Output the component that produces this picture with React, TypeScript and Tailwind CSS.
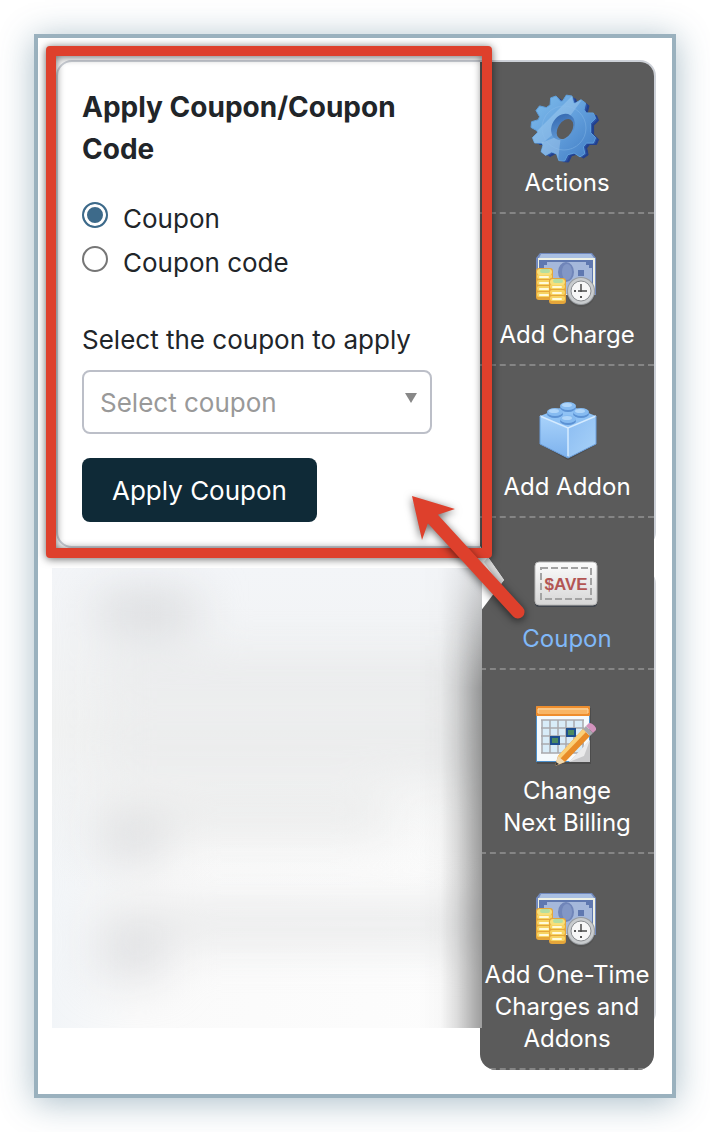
import React from "react";

const gearTeeth = [-81, -54, -22, 22, 56, 94, 129, 158, 186, 217, 251];

function gearPath(cx: number, cy: number, body: number, tip: number) {
  const at = (deg: number, r: number) => {
    const a = (deg * Math.PI) / 180;
    return `${(cx + r * Math.cos(a)).toFixed(1)} ${(cy + r * Math.sin(a)).toFixed(1)}`;
  };
  return (
    gearTeeth
      .map((t, i) => `${i === 0 ? "M" : "L"}${at(t - 12, body)}L${at(t - 5, tip)}L${at(t + 5, tip)}L${at(t + 12, body)}`)
      .join("") + "Z"
  );
}

function GearIcon() {
  return (
    <svg viewBox="0 0 76 76" className="size-[76px] overflow-visible" aria-hidden="true">
      <defs>
        <linearGradient id="gearFace" x1="0" y1="0" x2="1" y2="1">
          <stop offset="0" stopColor="#7fbdec" />
          <stop offset="0.5" stopColor="#629fdc" />
          <stop offset="1" stopColor="#3f7ac2" />
        </linearGradient>
        <linearGradient id="gearInner" x1="0" y1="0" x2="1" y2="1">
          <stop offset="0" stopColor="#2f62ac" />
          <stop offset="1" stopColor="#6ca6de" />
        </linearGradient>
        <mask id="gearHole">
          <rect x="-10" y="-10" width="100" height="100" fill="#fff" />
          <ellipse cx="36" cy="38" rx="7" ry="11" transform="rotate(32 36 38)" fill="#000" />
        </mask>
        <clipPath id="gearClip">
          <path d={gearPath(35, 37, 27, 33)} />
        </clipPath>
      </defs>
      <g mask="url(#gearHole)">
        <path d={gearPath(39, 39, 26, 32)} fill="#21408f" stroke="#21408f" strokeWidth="1" strokeLinejoin="round" />
        <path d={gearPath(37, 38, 26, 32)} fill="#2d55a8" stroke="#2d55a8" strokeWidth="1" strokeLinejoin="round" />
        <path d={gearPath(35, 37, 27, 33)} fill="url(#gearFace)" stroke="#5f9fdb" strokeWidth="1" strokeLinejoin="round" />
        <g clipPath="url(#gearClip)">
          <path d="M33 36 58 2 48 0 0 48 4 60Z" fill="#c3e2f9" opacity="0.3" />
          <path d="M32 44 28 78 12 74 2 56Z" fill="#d5e8fa" opacity="0.3" />
        </g>
        <circle cx="35" cy="37" r="22" fill="none" stroke="#8dbfec" strokeWidth="1" opacity="0.4" />
        <ellipse cx="34" cy="36" rx="11" ry="14" transform="rotate(32 34 36)" fill="url(#gearInner)" />
      </g>
    </svg>
  );
}

function CoinStack({ x, y, coins }: { x: number; y: number; coins: number }) {
  return (
    <g>
      <rect x={x} y={y} width="17" height={coins * 6 + 8} rx="3" fill="#e5a63a" />
      {Array.from({ length: coins }, (_, i) => (
        <g key={i}>
          <rect x={x + 1} y={y + 6 + i * 6} width="15" height="5" rx="2" fill="#f7d462" />
          <rect x={x + 3} y={y + 8 + i * 6} width="10" height="2" rx="1" fill="#fffbdc" />
        </g>
      ))}
      <rect x={x + 1} y={y + 1} width="15" height="6" rx="3" fill="#f7e07a" />
      <rect x={x + 4} y={y + 1} width="10" height="4" rx="2" fill="#b5dea0" />
    </g>
  );
}

function MoneyIcon() {
  return (
    <svg viewBox="0 0 76 76" className="size-[76px]" aria-hidden="true">
      <path d="M11 10H63L67 15V52H7V15Z" fill="#7189bd" />
      <path d="M12 11H62L65 15H10Z" fill="#a9bfe2" />
      <rect x="9" y="15" width="57" height="37" fill="#eef1e4" />
      <rect x="10" y="17" width="54" height="34" fill="#5f78b0" />
      <rect x="12" y="19" width="51" height="32" fill="#a5b8db" />
      <path d="M12 19h6v3h-3v3h-3ZM63 19h-6v3h3v3h3Z" fill="#5f78b0" />
      <ellipse cx="37" cy="29" rx="8" ry="10" fill="#7085b9" />
      <ellipse cx="38" cy="29" rx="5" ry="8" fill="#8297c6" />
      <rect x="49" y="27" width="6" height="6" fill="#5f78b0" />
      <CoinStack x={7} y={25} coins={4} />
      <CoinStack x={20} y={35} coins={3} />
      <circle cx="52" cy="50" r="14" fill="#4b4b4b" opacity="0.5" />
      <circle cx="52" cy="48" r="14" fill="#999da1" />
      <circle cx="52" cy="48" r="13" fill="#c9ccce" />
      <circle cx="52" cy="48" r="10" fill="#f7f7f7" stroke="#8b8e91" strokeWidth="1" />
      <path d="M52 41v8M49 48h9" stroke="#4a4a4a" strokeWidth="1.5" />
      <path d="M45 48h2M52 53v2" stroke="#555" strokeWidth="2" />
    </svg>
  );
}

function BrickIcon() {
  const studs = [
    [39, 11],
    [26, 17],
    [52, 17],
    [39, 24],
  ];
  return (
    <svg viewBox="0 0 76 76" className="size-[76px]" aria-hidden="true">
      <defs>
        <linearGradient id="brickLeft" x1="0" y1="0" x2="0" y2="1">
          <stop offset="0" stopColor="#a8d2fa" />
          <stop offset="1" stopColor="#7db2ee" />
        </linearGradient>
        <linearGradient id="brickRight" x1="0" y1="0" x2="1" y2="1">
          <stop offset="0" stopColor="#8bbcf2" />
          <stop offset="1" stopColor="#a8d2f8" />
        </linearGradient>
      </defs>
      <path d="M12 50 39 65 67 50 39 60Z" fill="#3d3d3d" opacity="0.6" />
      <path d="M11 21 39 33V63L11 49Z" fill="url(#brickLeft)" />
      <path d="M67 21 39 33V63L67 49Z" fill="url(#brickRight)" />
      <path d="M11 21 39 10 67 21 39 33Z" fill="#8fc2f5" />
      <path d="M11 21 39 33 67 21M39 33V61" fill="none" stroke="#d5ebff" strokeWidth="1.5" />
      <path d="M11 21V49L39 63 67 49V21" fill="none" stroke="#6c9fdc" strokeWidth="1" />
      {studs.map(([x, y]) => (
        <g key={`${x}-${y}`}>
          <ellipse cx={x} cy={y + 2} rx="8" ry="4" fill="#5c92d4" />
          <ellipse cx={x} cy={y} rx="8" ry="4" fill="#86bbf1" />
          <ellipse cx={x - 1} cy={y - 1} rx="5" ry="2" fill="#b0d6fa" />
        </g>
      ))}
    </svg>
  );
}

function SaveIcon() {
  return (
    <svg viewBox="0 0 76 76" className="size-[76px]" aria-hidden="true">
      <defs>
        <linearGradient id="ticket" x1="0" y1="0" x2="0" y2="1">
          <stop offset="0" stopColor="#fcfcfc" />
          <stop offset="1" stopColor="#d6d6d6" />
        </linearGradient>
      </defs>
      <rect x="6" y="17" width="62" height="43" rx="4" fill="#3f444c" />
      <rect x="6" y="15" width="62" height="43" rx="4" fill="url(#ticket)" stroke="#b9b9b9" strokeWidth="1" />
      <rect x="12" y="21" width="50" height="31" fill="none" stroke="#a3a3a3" strokeWidth="2" strokeDasharray="7 3" />
      <text
        x="37"
        y="43"
        textAnchor="middle"
        className="fill-[#b35553] font-['Liberation_Sans',Arial,sans-serif] text-[17px] font-bold"
      >
        $AVE
      </text>
    </svg>
  );
}

function CalendarIcon() {
  return (
    <svg viewBox="0 0 76 76" className="size-[76px]" aria-hidden="true">
      <rect x="8" y="9" width="54" height="56" fill="#3d3d3d" opacity="0.5" />
      <rect x="7" y="7" width="54" height="56" fill="#4b8fcb" />
      <rect x="8" y="17" width="52" height="45" fill="#f5fafd" />
      <rect x="7" y="7" width="54" height="10" rx="1" fill="#ee8d2d" />
      <rect x="9" y="9" width="50" height="6" fill="#f8b565" />
      <path d="M9 14v-4h50v4" fill="none" stroke="#fbd9a8" strokeWidth="1" />
      <rect x="13" y="21" width="41" height="33" fill="#d8ecf8" />
      <path
        d="M13 21V54M21 21V54M29 21V54M37 21V54M45 21V54M54 21V54M12 21H55M12 29H55M12 37H55M12 45H55M12 54H55"
        stroke="#a9a9ad"
        strokeWidth="1.5"
      />
      <rect x="38" y="30" width="8" height="7" fill="#4a8a62" stroke="#1d4f8f" strokeWidth="2" />
      <rect x="22" y="38" width="8" height="7" fill="#4a8a62" stroke="#1d4f8f" strokeWidth="2" />
      <path d="M40 63 61 41V63Z" fill="#c9c9cb" />
      <path d="M40 63 61 41 55 57Z" fill="#ebebec" />
      <path d="M26 67 29 57 54 30 61 37 36 63Z" fill="#e88c28" />
      <path d="M29 57 54 30 57 33 31 60Z" fill="#fbd077" />
      <path d="M26 67 29 57 36 63Z" fill="#f0d9b0" />
      <path d="M26 67 27 63 30 65Z" fill="#3a3a3a" />
      <path d="M54 30 57 27 64 34 61 37Z" fill="#a7a9ad" />
      <path d="M57 27 60 24Q64 24 67 29V31L64 34Z" fill="#d393bd" />
    </svg>
  );
}

const menu = [
  { label: "Actions", Icon: GearIcon },
  { label: "Add Charge", Icon: MoneyIcon },
  { label: "Add Addon", Icon: BrickIcon },
  { label: "Coupon", Icon: SaveIcon, active: true },
  { label: "Change\nNext Billing", Icon: CalendarIcon },
  { label: "Add One-Time Charges and Addons", Icon: MoneyIcon },
];

function MenuItem({ label, Icon, active = false }: any) {
  return (
    <li className="relative border-b-2 border-dashed border-[#858585]">
      {active && (
        <svg viewBox="0 0 24 66" className="absolute left-0 top-7 h-[66px] w-6" aria-hidden="true">
          <path d="M0 0 24 34 0 66Z" fill="#fff" />
          <path d="M8 11 24 34 20 39 4 16Z" fill="#dcdcdc" />
        </svg>
      )}
      <button
        type="button"
        className={`flex w-full flex-col items-center pb-[13px] pt-[29px] text-2xl leading-8 ${active ? "text-[#80b8f8]" : "text-white"}`}
      >
        <Icon />
        <span className="whitespace-pre-line text-center">{label}</span>
      </button>
    </li>
  );
}

function RadioOption({ label, value, defaultChecked = false }: any) {
  return (
    <label className="flex h-11 items-start gap-[15px] leading-[42px]">
      <input
        type="radio"
        name="couponType"
        value={value}
        defaultChecked={defaultChecked}
        className="mt-1 size-[26px] shrink-0 appearance-none rounded-full border-2 border-[#767676] bg-white checked:border-[#3d6a8a] checked:bg-[#3d6a8a] checked:shadow-[inset_0_0_0_3px_#fff]"
      />
      {label}
    </label>
  );
}

function CouponForm() {
  return (
    <form className="pb-[26px] pl-[26px] pr-12 pt-[26px]" onSubmit={(e) => e.preventDefault()}>
      <h2 className="text-[28px] font-bold leading-[42px]">Apply Coupon/Coupon Code</h2>
      <fieldset className="mt-7">
        <RadioOption label="Coupon" value="coupon" defaultChecked />
        <RadioOption label="Coupon code" value="code" />
      </fieldset>
      <label htmlFor="coupon" className="mt-8 block leading-[44px]">
        Select the coupon to apply
      </label>
      <div className="relative mt-2">
        <select
          id="coupon"
          defaultValue=""
          className="h-16 w-full appearance-none rounded-lg border-2 border-[#bcbfc8] bg-white pl-4 pr-10 text-[#999]"
        >
          <option value="">Select coupon</option>
        </select>
        <svg viewBox="0 0 12 10" className="pointer-events-none absolute right-[15px] top-[23px] h-2.5 w-3" aria-hidden="true">
          <path d="M0 0H12L6 10Z" fill="#888" />
        </svg>
      </div>
      <button type="submit" className="mt-6 block h-16 rounded-lg bg-[#0f2a37] px-[30px] text-white">
        Apply Coupon
      </button>
    </form>
  );
}

// details of the subscription, hidden behind a blur
function BlurredDetails() {
  return (
    <div className="relative z-10 col-start-1 row-start-2 -mr-0.5 overflow-hidden bg-gradient-to-r from-[#f2f5f8] via-[#fafafa] via-20% to-[#fdfdfd]">
      <div className="absolute inset-x-0 top-0 h-80 bg-gradient-to-b from-[#f3f5f8] via-[#f1f2f2] via-50% to-transparent" />
      <div className="relative flex flex-col items-start pl-12 blur-xl">
        <div className="mt-7 h-8 w-24 bg-[#d3d4d6]" />
        <div className="mt-9 h-8 w-full bg-[#e7e8e9]" />
        <div className="mt-9 h-8 w-full bg-[#e7e8e9]" />
        <div className="mt-9 h-7 w-72 bg-[#e5e6e6]" />
        <div className="h-8 w-16 bg-[#dadbde]" />
        <div className="mt-12 h-8 w-full bg-[#e4e5e6]" />
        <div className="h-9 w-16 bg-[#dbdcdf]" />
      </div>
      <div className="absolute inset-y-0 right-0 w-16 bg-[linear-gradient(to_right,transparent,rgba(0,0,0,0.02)_35%,rgba(0,0,0,0.12)_60%,rgba(0,0,0,0.38))] [mask-image:linear-gradient(to_bottom,rgba(0,0,0,0.3),black_120px)]" />
    </div>
  );
}

export default function App() {
  return (
    <div className="bg-white p-[34px] font-[Inter,sans-serif] text-[26px] text-[#212529]">
      <main className="grid grid-cols-[minmax(0,1fr)_174px_2px] grid-rows-[auto_460px_1fr] gap-y-5 border-4 border-[#9ab1be] bg-white pb-6 pl-3.5 pr-4 pt-[22px] shadow-[0_4px_32px_#9ab1bed9]">
        <div className="col-span-3 col-start-1 row-start-1 ml-1 rounded-2xl border-2 border-[#cdd1d8] bg-white" />
        <div className="col-span-3 col-start-1 row-start-2 rounded-r-2xl border-r-2 border-[#d3d6dc]" />

        <nav className="col-start-2 row-span-3 row-start-1 mt-0.5">
          <ul className="overflow-hidden rounded-b-2xl rounded-tr-[14px] bg-[#5b5b5b]">
            {menu.map((item) => (
              <MenuItem key={item.label} {...item} />
            ))}
          </ul>
        </nav>

        <BlurredDetails />

        <section className="relative z-20 col-start-1 row-start-1 ml-1">
          <CouponForm />
          <div className="pointer-events-none absolute -bottom-2.5 -left-2.5 -right-3 -top-3.5 rounded border-10 border-[#de402c] drop-shadow-[0_1px_4px_rgba(0,0,0,0.6)]" />
          <svg
            viewBox="0 0 130 136"
            className="pointer-events-none absolute -bottom-[78px] -right-[52px] h-[136px] w-[130px] overflow-visible drop-shadow-[0_2px_4px_rgba(0,0,0,0.6)]"
            aria-hidden="true"
          >
            <path d="M29 27 116 122" stroke="#de402c" strokeWidth="13" strokeLinecap="round" />
            <path d="M10 6 53 19 35 25 26 33 20 50Z" fill="#de402c" />
          </svg>
        </section>
      </main>
    </div>
  );
}
